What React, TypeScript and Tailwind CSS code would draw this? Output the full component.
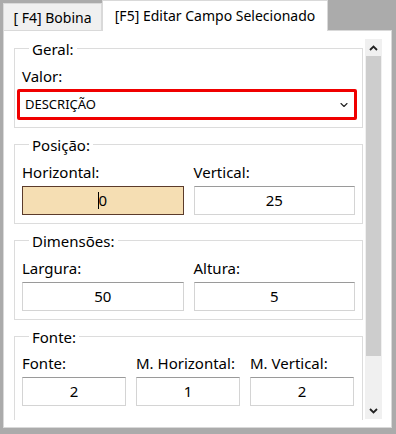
import { ChevronDown } from 'lucide-react';

const font = { fontFamily: '"Noto Sans", "Open Sans", sans-serif' };

function Group({ title, children }: { title: string; children: React.ReactNode }) {
  return (
    <div className="relative border border-[#dcdcdc] h-[80px] px-[7px] pt-[17px] shrink-0">
      <span className="absolute -top-[10px] left-[14px] px-[3px] bg-white leading-[20px] text-[15px] text-black">
        {title}
      </span>
      {children}
    </div>
  );
}

function Field({ label, value, active }: { label: string; value: string; active?: boolean }) {
  return (
    <div className="flex flex-col">
      <span className="leading-[20px] text-[15px] text-black whitespace-nowrap">{label}</span>
      <div
        className={
          active
            ? 'mt-[4px] h-[29px] border border-[#5b3b2b] bg-[#f5deb3] flex items-center justify-center text-[15px] text-black'
            : 'mt-[4px] h-[29px] border border-[#d4d4d4] border-t-[#9a9a9a] bg-white flex items-center justify-center text-[15px] text-black'
        }
      >
        {active && <span className="w-px h-[17px] bg-black mr-[1px]" />}
        <span className={active ? '-ml-[2px]' : ''}>{value}</span>
      </div>
    </div>
  );
}

function ScrollArrow({ up }: { up?: boolean }) {
  return (
    <div className="h-[17px] flex items-center justify-center">
      <svg width="9" height="6" viewBox="0 0 9 6">
        <path
          d={up ? 'M1 5 L4.5 1.5 L8 5' : 'M1 1 L4.5 4.5 L8 1'}
          fill="none"
          stroke="#222"
          strokeWidth="1.8"
        />
      </svg>
    </div>
  );
}

export default function App() {
  return (
    <div className="w-[396px] h-[434px] bg-[#ababab] pl-[3px] pr-[4px] pb-[6px] flex flex-col" style={font}>
      {/* Tabs */}
      <div className="h-[30px] flex items-end shrink-0">
        <div className="w-[99px] h-[27px] bg-[#f0f0f0] border border-[#d9d9d9] border-b-0 flex items-center justify-center text-[14px] text-black">
          [ F4] Bobina
        </div>
        <div className="w-[226px] h-[31px] -mb-px relative z-10 bg-white border border-[#d9d9d9] border-b-0 flex items-center justify-center pb-[2px] text-[14px] text-black">
          [F5] Editar Campo Selecionado
        </div>
      </div>

      {/* Panel */}
      <div className="flex-1 bg-white border border-[#d9d9d9] pt-[9px] pb-[7px] pr-[9px] flex min-h-0">
        <div className="flex-1 overflow-hidden pl-[10px] pr-[2px] pt-[8px] flex flex-col gap-[16px]">
          <Group title="Geral:">
            <span className="block leading-[20px] text-[15px] text-black">Valor:</span>
            <div className="mt-[3px] -ml-[5px] w-[340px] h-[31px] border-[3px] border-[#f00000] rounded-[2px] flex items-center justify-between pl-[5px] pr-[4px] text-[13px] text-black">
              <span>DESCRIÇÃO</span>
              <ChevronDown size={12} strokeWidth={2.25} className="text-[#222]" />
            </div>
          </Group>

          <Group title="Posição:">
            <div className="grid grid-cols-2 gap-x-[10px]">
              <Field label="Horizontal:" value="0" active />
              <Field label="Vertical:" value="25" />
            </div>
          </Group>

          <Group title="Dimensões:">
            <div className="grid grid-cols-2 gap-x-[10px]">
              <Field label="Largura:" value="50" />
              <Field label="Altura:" value="5" />
            </div>
          </Group>

          <div className="relative border border-[#dcdcdc] px-[7px] pt-[16px] pb-[8px] shrink-0">
            <span className="absolute -top-[10px] left-[14px] px-[3px] bg-white leading-[20px] text-[15px] text-black">
              Fonte:
            </span>
            <div className="grid grid-cols-[104px_104px_104px] gap-x-[10px]">
              <Field label="Fonte:" value="2" />
              <Field label="M. Horizontal:" value="1" />
              <Field label="M. Vertical:" value="2" />
            </div>
            <div className="grid grid-cols-2 gap-x-[10px] mt-[10px]">
              <span className="leading-[20px] text-[15px] text-black">Alinhamento:</span>
              <span className="leading-[20px] text-[15px] text-black">Estilo da fonte:</span>
            </div>
          </div>
        </div>

        {/* Scrollbar */}
        <div className="w-[17px] bg-[#f0f0f0] flex flex-col shrink-0 -mt-[1px] mb-[1px]">
          <ScrollArrow up />
          <div className="h-[300px] bg-[#cdcdcd] mx-[1px]" />
          <div className="flex-1" />
          <ScrollArrow />
        </div>
      </div>
    </div>
  );
}
